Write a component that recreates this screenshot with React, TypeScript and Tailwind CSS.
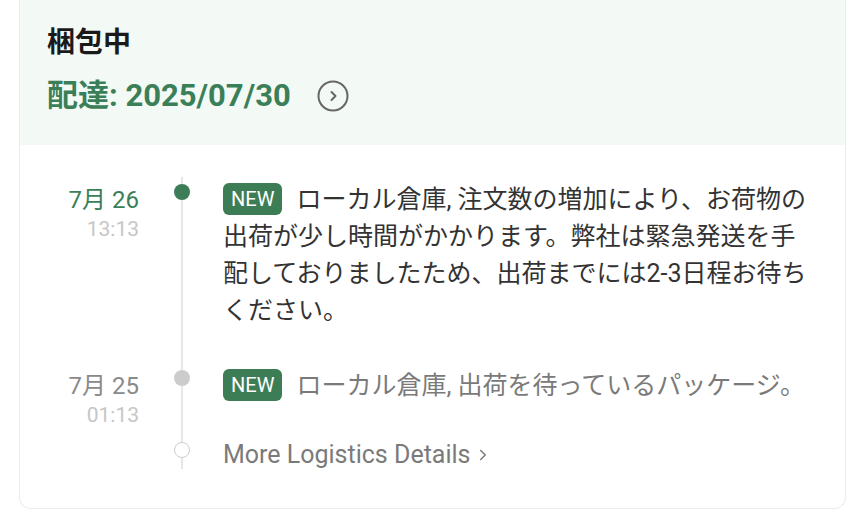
import React from 'react';
import { ChevronRight } from 'lucide-react';

type Event = {
  date: string;
  time: string;
  text: string;
  active: boolean;
};

const events: Event[] = [
  {
    date: '7月 26',
    time: '13:13',
    text: 'ローカル倉庫, 注文数の増加により、お荷物の出荷が少し時間がかかります。弊社は緊急発送を手配しておりましたため、出荷までには2-3日程お待ちください。',
    active: true,
  },
  {
    date: '7月 25',
    time: '01:13',
    text: 'ローカル倉庫, 出荷を待っているパッケージ。',
    active: false,
  },
];

const CircleArrow = () => (
  <svg width="32" height="32" viewBox="0 0 32 32" fill="none" stroke="#666666" strokeWidth="2" strokeLinecap="round" strokeLinejoin="round">
    <circle cx="16" cy="16" r="14.5" />
    <path d="M14.5 12 L18.5 16 L14.5 20" />
  </svg>
);

const App: React.FC = () => {
  return (
    <div className="w-[864px] h-[512px] bg-white font-['Roboto','Noto_Sans_CJK_JP',sans-serif]">
      <div className="ml-[19px] w-[827px] h-[509px] border-x border-b border-[#ececec] rounded-b-[12px] overflow-hidden flex flex-col">
        {/* header */}
        <div className="bg-[#f3f9f5] h-[145px] pl-[27px] pt-[25px] flex flex-col">
          <div className="text-[28px] leading-[36px] font-bold text-[#1a1a1a]">梱包中</div>
          <div className="mt-[15px] flex items-center h-[40px]">
            <span className="text-[31px] leading-[40px] font-bold text-[#3b7f58]">配達: 2025/07/30</span>
            <span className="ml-[26px] flex items-center">
              <CircleArrow />
            </span>
          </div>
        </div>

        {/* timeline */}
        <div className="pt-[32px] flex flex-col">
          {events.map((ev, i) => (
            <div key={i} className="flex items-stretch">
              <div className="w-[119px] text-right flex flex-col items-end pt-[9px]">
                <div className={`text-[24px] leading-[28px] ${ev.active ? 'text-[#3b7f58]' : 'text-[#8a8a8a]'}`}>{ev.date}</div>
                <div className="mt-[3px] text-[21px] leading-[24px] text-[#c6c6c6]">{ev.time}</div>
              </div>
              <div className="w-[84px] flex flex-col items-center pl-[2px]">
                <div className="h-[7px] w-[2px] bg-[#e6e6e6]" />
                <div className={`w-[16px] h-[16px] rounded-full ${ev.active ? 'bg-[#3b7d57]' : 'bg-[#cccccc]'}`} />
                <div className="flex-1 w-[2px] bg-[#e6e6e6]" />
              </div>
              <div className={`flex-1 pr-[30px] pt-[4px] ${i === 0 ? 'pb-[34px]' : 'pb-[31px]'}`}>
                <p className={`text-[25px] leading-[37px] ${ev.active ? 'text-[#333333]' : 'text-[#7a7a7a]'}`}>
                  <span className="inline-flex items-center justify-center align-[2px] h-[32px] px-[8px] mr-[14px] rounded-[6px] bg-[#3d7d56] text-white text-[20px] leading-[24px]">
                    NEW
                  </span>
                  {ev.text}
                </p>
              </div>
            </div>
          ))}

          <div className="flex items-start">
            <div className="w-[119px]" />
            <div className="w-[84px] flex flex-col items-center pl-[2px]">
              <div className="h-[7px] w-[2px] bg-[#e6e6e6]" />
              <div className="w-[16px] h-[16px] rounded-full border-[1.5px] border-[#cccccc] bg-white" />
              <div className="h-[11px] w-[2px] bg-[#e6e6e6]" />
            </div>
            <div className="flex items-center pt-[2px] text-[25px] leading-[36px] text-[#7a7a7a]">
              More Logistics Details
              <ChevronRight className="ml-[4px] w-[18px] h-[18px]" strokeWidth={2} color="#7a7a7a" />
            </div>
          </div>
        </div>
      </div>
    </div>
  );
};

export default App;
